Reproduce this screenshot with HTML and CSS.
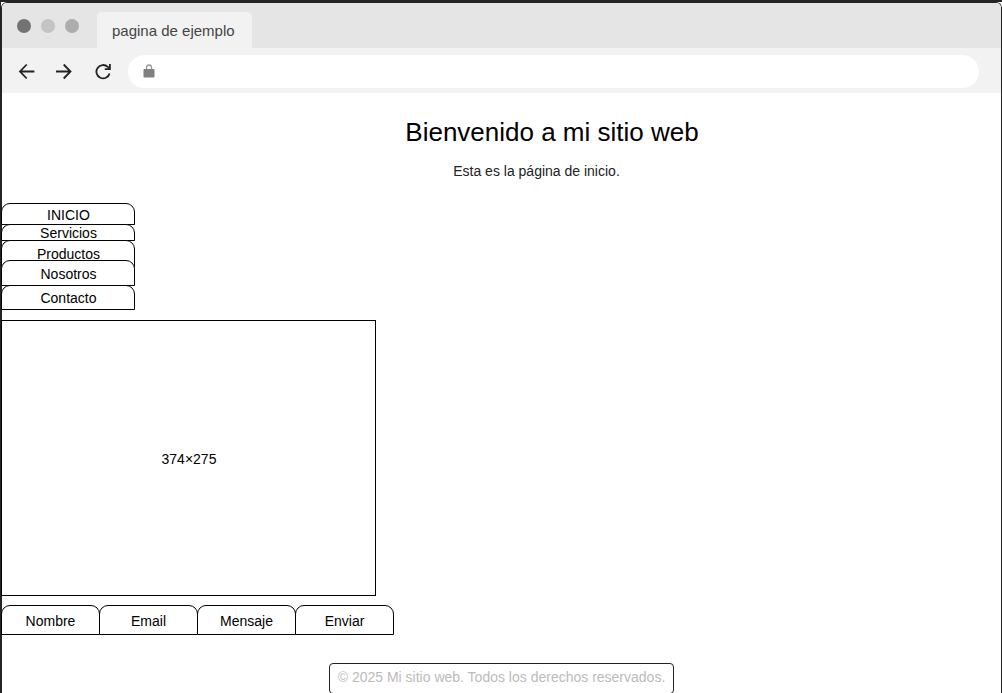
FILE: index.html
```html
<!DOCTYPE html>
<html lang="es">
<head>
<meta charset="utf-8">
<title>pagina de ejemplo</title>
<link rel="stylesheet" href="styles.css">
</head>
<body>
<div class="frame">
  <div class="browser">
    <header class="chrome">
      <div class="tabs">
        <div class="dots"><span class="dot dot-dark"></span><span class="dot dot-light"></span><span class="dot dot-mid"></span></div>
        <div class="tab">pagina de ejemplo</div>
      </div>
      <div class="toolbar">
        <button class="tool" type="button" aria-label="Atrás">
          <svg width="18" height="18" viewBox="0 0 18 18"><path d="M16.400 9.500H2M8.700 2.500L2 9.500L8.700 16.500"/></svg>
        </button>
        <button class="tool" type="button" aria-label="Adelante">
          <svg width="18" height="18" viewBox="0 0 18 18"><path d="M1 9.500H15.500M8.700 2.500L15.500 9.500L8.700 16.500"/></svg>
        </button>
        <button class="tool reload" type="button" aria-label="Recargar">
          <svg width="18" height="18" viewBox="0 0 18 18"><path d="M15.600 11.500A6.700 6.700 0 1 1 13.800 4.900L15.500 6.600"/><path class="solid" d="M16.800 2V8H10.800V6.200H15V2Z"/></svg>
        </button>
        <div class="address">
          <svg class="lock" width="12" height="14" viewBox="0 0 12 14"><path d="M3.500 5.500V3.500A2.500 2.500 0 0 1 8.500 3.500V5.500" fill="none" stroke="#999" stroke-width="1.300"/><rect x="0.500" y="5" width="11" height="8.500" rx="1" fill="#808080"/></svg>
          <input class="url" type="text" aria-label="Dirección">
        </div>
      </div>
    </header>
    <main class="page">
      <h1 class="title">Bienvenido a mi sitio web</h1>
      <p class="intro">Esta es la página de inicio.</p>
      <nav class="menu">
        <a class="box item-inicio" href="#">INICIO</a>
        <a class="box item-servicios" href="#">Servicios</a>
        <a class="box item-productos" href="#">Productos</a>
        <a class="box item-nosotros" href="#">Nosotros</a>
        <a class="box item-contacto" href="#">Contacto</a>
      </nav>
      <div class="image">374×275</div>
      <div class="form">
        <button class="box field" type="button">Nombre</button>
        <button class="box field" type="button">Email</button>
        <button class="box field" type="button">Mensaje</button>
        <button class="box field" type="button">Enviar</button>
      </div>
      <footer class="footer">© 2025 Mi sitio web. Todos los derechos reservados.</footer>
    </main>
  </div>
</div>
</body>
</html>
```
FILE: styles.css
```css
* { box-sizing: border-box; }
html { overflow: hidden; }
body {
  margin: 0;
  background: #fff;
  color: #000;
  font: 14px/16px "Liberation Sans", Arial, sans-serif;
}
.frame {
  min-height: 100vh;
  border: solid #232323;
  border-width: 2px 0 0 1px;
}
.browser {
  min-height: calc(100vh - 2px);
  border: 1px solid #232323;
  border-bottom: 0;
  border-radius: 6px 6px 0 0;
}
.chrome { background: #f2f2f2; border-radius: 5px 5px 0 0; }
.tabs {
  display: flex;
  height: 45px;
  background: #e5e5e5;
  border-radius: 5px 5px 0 0;
}
.dots {
  display: flex;
  gap: 10px;
  width: 95px;
  padding: 16px 0 0 15px;
}
.dot { width: 14px; height: 14px; border-radius: 50%; }
.dot-dark { background: #737373; }
.dot-light { background: #c4c4c4; }
.dot-mid { background: #adadad; }
.tab {
  margin-top: 9px;
  padding: 10px 17px 0 15px;
  border-radius: 5px 5px 0 0;
  background: #f2f2f2;
  color: #444;
  font-size: 15px;
  line-height: 18px;
}
.toolbar {
  display: flex;
  align-items: center;
  height: 45px;
  padding: 1px 22px 0 16px;
}
.tool {
  width: 18px;
  height: 18px;
  margin-right: 19px;
  padding: 0;
  border: 0;
  background: none;
}
.reload { margin: 0 16px 0 2px; }
.tool svg { display: block; fill: none; stroke: #232323; stroke-width: 1.8; }
.tool .solid { fill: #232323; stroke: none; }
.address {
  display: flex;
  align-items: center;
  flex: 1;
  height: 33px;
  padding: 0 15px;
  border-radius: 17px;
  background: #fff;
}
.url {
  flex: 1;
  min-width: 0;
  margin-left: 8px;
  border: 0;
  outline: 0;
  background: none;
  font: inherit;
}
.title {
  margin: 24px 0 0;
  padding-left: 101px;
  font-size: 26px;
  font-weight: 400;
  line-height: 30px;
  text-align: center;
}
.intro {
  margin: 16px 0 24px;
  padding-left: 70px;
  color: #222;
  text-align: center;
}
.menu {
  display: flex;
  flex-direction: column;
  width: 134px;
  margin-left: -1px;
}
.box {
  display: flex;
  align-items: center;
  justify-content: center;
  padding: 0;
  border: 1px solid #000;
  border-radius: 9px 9px 0 0;
  background: #fff;
  color: #000;
  font: inherit;
  text-decoration: none;
}
.menu .box { margin-bottom: -1px; padding-left: 1px; }
.menu .item-inicio { height: 22px; padding-top: 2px; }
.item-servicios { height: 17px; }
.menu .item-productos { height: 28px; margin-bottom: -8px; }
.menu .item-nosotros { height: 26px; padding-top: 2px; }
.item-contacto { height: 25px; }
.image {
  display: flex;
  align-items: center;
  justify-content: center;
  width: 375px;
  height: 276px;
  margin: 11px 0 9px -1px;
  padding: 2px 0 0 1px;
  border: 1px solid #000;
}
.form { display: flex; width: 392px; margin-left: -1px; }
.field {
  flex: 1;
  height: 30px;
  margin-right: -1px;
  padding-top: 2px;
}
.footer {
  width: fit-content;
  height: 31px;
  margin: 28px auto -1px;
  padding: 5px 8px 0;
  border: 1px solid #232323;
  border-radius: 4px;
  color: #bbb;
}
```
